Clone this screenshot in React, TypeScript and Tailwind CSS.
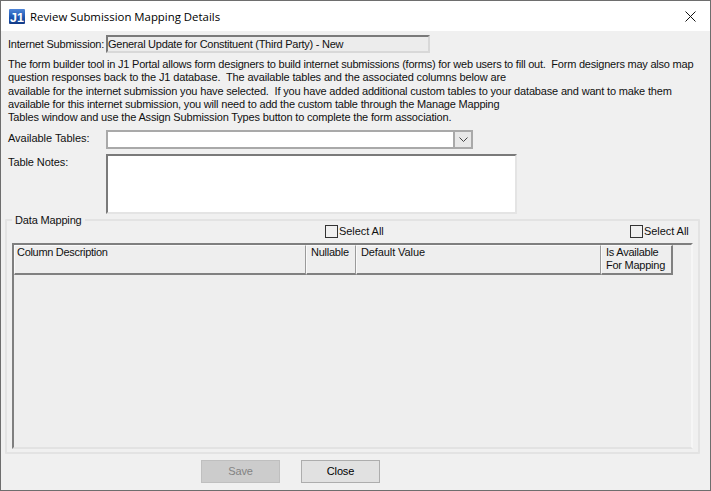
import React from "react";

const lines = [
  { t: "The form builder tool in J1 Portal allows form designers to build internet submissions (forms) for web users to fill out.  Form designers may also map", c: "tracking-[-0.22px]" },
  { t: "question responses back to the J1 database.  The available tables and the associated columns below are", c: "tracking-[-0.14px]" },
  { t: "available for the internet submission you have selected.  If you have added additional custom tables to your database and want to make them", c: "tracking-[-0.17px]" },
  { t: "available for this internet submission, you will need to add the custom table through the Manage Mapping", c: "tracking-[-0.19px]" },
  { t: "Tables window and use the Assign Submission Types button to complete the form association.", c: "tracking-[-0.16px]" },
];

function Check() {
  return (
    <label className="flex items-center gap-[1px] w-[59px]">
      <span className="w-[13px] h-[13px] shrink-0 border border-[#333333] bg-[#f0f0f0]" />
      <span className="whitespace-pre tracking-[-0.06px]">Select All</span>
    </label>
  );
}

const cell = "border-l border-t border-l-[#fafafa] border-t-[#fafafa] border-b-2 border-b-[#808080] whitespace-pre";

export default function App() {
  return (
    <div
      className="w-[711px] h-[491px] flex flex-col border border-[#6e6e6e] bg-[#f0f0f0] text-[#111111] text-[11px] tracking-[-0.16px] leading-[13px] overflow-hidden"
      style={{ fontFamily: '"Liberation Sans", Arial, sans-serif' }}
    >
      <div className="h-[30px] shrink-0 bg-white flex items-center pl-[8px] pr-[14px] tracking-normal">
        <svg width="16" height="15" viewBox="0 0 16 15" className="shrink-0">
          <defs>
            <linearGradient id="j1g" x1="0" y1="0" x2="0" y2="1">
              <stop offset="0" stopColor="#4f86d8" />
              <stop offset="0.55" stopColor="#1d57b3" />
              <stop offset="1" stopColor="#123a86" />
            </linearGradient>
          </defs>
          <rect x="0" y="0" width="16" height="15" rx="1" fill="url(#j1g)" />
          <text x="8" y="12.5" textAnchor="middle" fontSize="12.5" fontWeight="700" fill="#ffffff" fontFamily="Liberation Sans">J1</text>
        </svg>
        <span className="ml-[5px] text-[11.4px] text-black" style={{ fontFamily: '"Open Sans", sans-serif' }}>Review Submission Mapping Details</span>
        <svg width="11" height="11" viewBox="0 0 11 11" className="ml-auto">
          <path d="M0.5 0.5L10.5 10.5M10.5 0.5L0.5 10.5" stroke="#111" strokeWidth="1" fill="none" />
        </svg>
      </div>

      <div className="flex-1 flex flex-col pl-[4px] pr-[10px]">
        <div className="flex items-center mt-[4px] h-[18px] pl-[3px]">
          <span className="w-[98px] shrink-0 whitespace-pre tracking-[-0.21px]">Internet Submission:</span>
          <div className="w-[324px] h-[18px] flex items-center border-2 border-t-[#7a7a7a] border-l-[#7a7a7a] border-r-[#d8d8d8] border-b-[#d8d8d8] bg-[#ececec] whitespace-pre tracking-[-0.26px]">
            General Update for Constituent (Third Party) - New
          </div>
        </div>

        <div className="mt-[5px] pl-[3px] leading-[13.33px] whitespace-pre h-[66.5px]">
          {lines.map((l) => (
            <div key={l.t} className={l.c}>{l.t}</div>
          ))}
        </div>

        <div className="flex items-start mt-[5px] pl-[3px]">
          <span className="w-[98px] shrink-0 mt-[2px] tracking-[-0.04px]">Available Tables:</span>
          <div className="w-[367px] h-[19px] flex border-2 border-[#a9a9a9] bg-white">
            <div className="flex-1" />
            <div className="w-[18px] bg-[#e8e8e8] border-l-2 border-[#a9a9a9] flex items-center justify-center">
              <svg width="9" height="5" viewBox="0 0 9 5">
                <path d="M0.5 0.5L4.5 4.5L8.5 0.5" stroke="#444" fill="none" />
              </svg>
            </div>
          </div>
        </div>

        <div className="flex items-start mt-[5px] pl-[3px]">
          <span className="w-[98px] shrink-0 mt-[2px] tracking-[-0.08px]">Table Notes:</span>
          <div className="w-[411px] h-[60px] bg-white border-2 border-t-[#7a7a7a] border-l-[#7a7a7a] border-r-[#e4e4e4] border-b-[#e4e4e4]" />
        </div>

        <div className="mt-[5px] h-[235px] border-2 border-[#e3e3e3] rounded-[1px] flex flex-col pl-[5px] pr-[5px]">
          <div className="flex h-[22px] relative">
            <span className="absolute left-0 -top-[7px] bg-[#f0f0f0] px-[3px]">Data Mapping</span>
            <div className="flex items-center pl-[313px]">
              <Check />
            </div>
            <div className="flex items-center ml-auto mr-[4px]">
              <Check />
            </div>
          </div>
          <div className="flex-1 mb-[3px] bg-[#eeeeee] border-l-2 border-t-2 border-[#7f7f7f] border-r-2 border-r-[#f6f6f6] border-b-2 border-b-[#e2e2e2] flex flex-col">
            <div className="flex h-[30px]">
              <div className={`w-[292px] pl-[2px] tracking-[-0.3px] border-r border-r-[#9a9a9a] ${cell}`}>Column Description</div>
              <div className={`w-[50px] pl-[4px] tracking-[-0.25px] border-r border-r-[#9a9a9a] ${cell}`}>Nullable</div>
              <div className={`w-[245px] pl-[4px] tracking-[-0.1px] border-r border-r-[#9a9a9a] ${cell}`}>Default Value</div>
              <div className={`w-[72px] pl-[4px] tracking-[-0.25px] border-r-2 border-r-[#808080] ${cell}`}>Is Available<br />For Mapping</div>
            </div>
          </div>
        </div>

        <div className="flex mt-[6px] pl-[196px] gap-[21px]">
          <div className="w-[79px] h-[23px] flex items-center justify-center bg-[#cccccc] border border-[#bfbfbf] text-[#838383]">Save</div>
          <div className="w-[79px] h-[23px] flex items-center justify-center bg-[#e1e1e1] border border-[#adadad] text-black">Close</div>
        </div>
      </div>
    </div>
  );
}
